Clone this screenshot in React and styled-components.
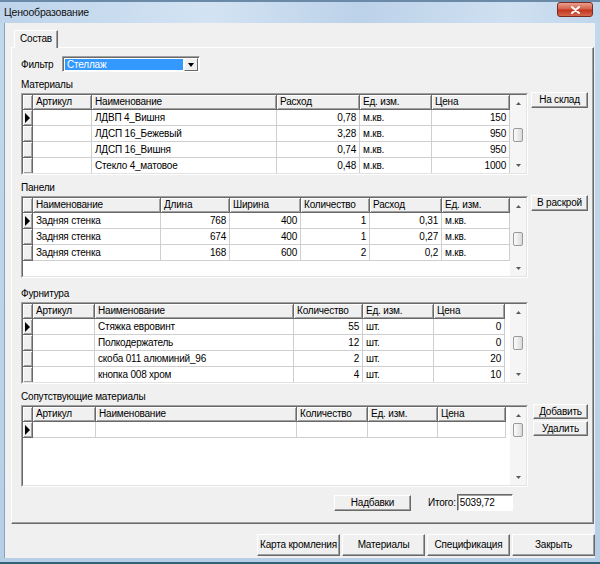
import React from "react";
import styled, { createGlobalStyle } from "styled-components";

const GlobalStyle = createGlobalStyle`
  html, body { margin: 0; padding: 0; background: #fff; }
  body {
    font-family: "Liberation Sans", Arial, sans-serif;
    font-size: 10px;
    letter-spacing: -0.2px;
    color: #000;
  }
`;

const Window = styled.div`
  width: 600px;
  height: 564px;
  box-sizing: border-box;
  display: flex;
  flex-direction: column;
  background: linear-gradient(180deg, #c3d8ed 0%, #b7cfe6 100%);
  padding-bottom: 4px;
  border-bottom: 2px solid #2f6477;
  overflow: hidden;
`;

const TitleBar = styled.div`
  height: 23px;
  flex: none;
  box-sizing: border-box;
  display: flex;
  align-items: flex-start;
  justify-content: space-between;
  padding: 0 7px 0 4px;
  border-top: 2px solid #6b8aa8;
  background: linear-gradient(90deg, #bdd4eb 0%, #d3e3f3 35%, #bcd2e9 60%, #cfe0f1 85%, #c0d6ec 100%);
`;

const Title = styled.span`
  font-size: 10.5px;
  line-height: 21px;
  color: #111;
`;

const CloseButton = styled.div`
  width: 36px;
  height: 15px;
  box-sizing: border-box;
  border: 1px solid #7b2a1f;
  border-radius: 3px;
  background: linear-gradient(180deg, #e9a08f 0%, #d6604a 45%, #c2351d 55%, #d3694f 100%);
  display: flex;
  align-items: center;
  justify-content: center;
`;

const Client = styled.div`
  flex: 1;
  margin: 0 5px 0 4px;
  padding: 0 0 2px 6px;
  background: #f0f0f0;
  display: flex;
  flex-direction: column;
  border-left: 1px solid #8aa3bd;
`;

const TabStrip = styled.div`
  height: 24px;
  flex: none;
  display: flex;
  align-items: flex-end;
  padding-left: 3px;
`;

const Tab = styled.div`
  position: relative;
  z-index: 1;
  height: 18px;
  box-sizing: border-box;
  padding: 0 5px 0 5px;
  margin-bottom: -1px;
  line-height: 16px;
  background: #f0f0f0;
  border-top: 1px solid #fff;
  border-left: 1px solid #fff;
  border-right: 1px solid #696969;
  box-shadow: inset -1px 0 0 #a0a0a0;
`;

const TabPage = styled.div`
  height: 477px;
  flex: none;
  box-sizing: border-box;
  margin-right: 1px;
  padding: 8px 0 0 9px;
  background: #f0f0f0;
  border-top: 1px solid #fff;
  border-left: 1px solid #fff;
  border-right: 1px solid #696969;
  border-bottom: 1px solid #696969;
  box-shadow: inset -1px -1px 0 #a0a0a0;
`;

const FilterRow = styled.div`
  display: flex;
  align-items: center;
  height: 16px;
`;

const FilterLabel = styled.span`
  width: 41px;
`;

const Combo = styled.div`
  width: 138px;
  height: 16px;
  box-sizing: border-box;
  display: flex;
  border: 1px solid;
  border-color: #a0a0a0 #fff #fff #a0a0a0;
  background: #fff;
`;

const ComboInner = styled.div`
  flex: 1;
  display: flex;
  padding: 1px;
  border-top: 1px solid #696969;
  border-left: 1px solid #696969;
`;

const ComboValue = styled.div`
  flex: 1;
  background: #3399ff;
  color: #fff;
  line-height: 11px;
  padding-left: 2px;
`;

const ComboButton = styled.div`
  width: 14px;
  box-sizing: border-box;
  margin: -1px 0 -1px 1px;
  background: #f0f0f0;
  border: 1px solid;
  border-color: #fff #696969 #696969 #fff;
  display: flex;
  align-items: center;
  justify-content: center;
`;

const DownTriangle = styled.span`
  width: 0;
  height: 0;
  border-left: 3.5px solid transparent;
  border-right: 3.5px solid transparent;
  border-top: 4px solid #000;
`;

const Section = styled.div`
  margin-top: ${(p) => p.$top}px;
`;

const SectionLabel = styled.div`
  height: 14px;
  line-height: 14px;
  margin-bottom: 1px;
`;

const SectionRow = styled.div`
  display: flex;
  align-items: flex-start;
`;

const GridBox = styled.div`
  width: 507px;
  height: 82px;
  flex: none;
  box-sizing: border-box;
  border: 1px solid;
  border-color: #a0a0a0 #fff #fff #a0a0a0;
  display: flex;
`;

const GridInner = styled.div`
  flex: 1;
  display: flex;
  border-top: 1px solid #696969;
  border-left: 1px solid #696969;
  border-right: 1px solid #e3e3e3;
  border-bottom: 1px solid #e3e3e3;
  background: #fff;
  overflow: hidden;
`;

const TableArea = styled.div`
  flex: 1;
  overflow: hidden;
  display: flex;
  flex-direction: column;
`;

const HeaderRow = styled.div`
  display: flex;
  height: 15px;
  flex: none;
`;

const DataRow = styled.div`
  display: flex;
  height: 16px;
  flex: none;
`;

const HeadCell = styled.div`
  width: ${(p) => p.$w}px;
  flex: none;
  box-sizing: border-box;
  background: #f0f0f0;
  border-right: 1px solid #696969;
  border-bottom: 1px solid #696969;
  box-shadow: inset 1px 1px 0 #fff, inset -1px -1px 0 #a0a0a0;
  padding-left: 3px;
  line-height: 14px;
  white-space: nowrap;
  overflow: hidden;
`;

const IndicatorCell = styled.div`
  width: 10px;
  flex: none;
  box-sizing: border-box;
  background: #f0f0f0;
  border-right: 1px solid #696969;
  border-bottom: 1px solid #696969;
  box-shadow: inset 1px 1px 0 #fff, inset -1px -1px 0 #a0a0a0;
  display: flex;
  align-items: center;
  padding-left: 2px;
`;

const RowMarker = styled.span`
  width: 0;
  height: 0;
  border-top: 5px solid transparent;
  border-bottom: 5px solid transparent;
  border-left: 5px solid #000;
`;

const Cell = styled.div`
  width: ${(p) => p.$w}px;
  flex: none;
  box-sizing: border-box;
  border-right: 1px solid #cfcfcf;
  border-bottom: 1px solid #cfcfcf;
  padding: 0 3px;
  line-height: 15px;
  text-align: ${(p) => p.$align || "left"};
  white-space: nowrap;
  overflow: hidden;
`;

const ScrollBar = styled.div`
  width: 16px;
  flex: none;
  background: #f5f5f5;
  display: flex;
  flex-direction: column;
`;

const ScrollArrow = styled.div`
  height: 16px;
  flex: none;
  display: flex;
  align-items: center;
  justify-content: center;
`;

const ScrollTrack = styled.div`
  flex: 1;
`;

const Thumb = styled.div`
  width: 10px;
  height: 14px;
  margin: ${(p) => p.$top}px 0 0 3px;
  box-sizing: border-box;
  border: 1px solid #9a9a9a;
  border-radius: 2px;
  background: linear-gradient(90deg, #fbfbfb 0%, #e9e9e9 60%, #d9d9d9 100%);
`;

const SideColumn = styled.div`
  display: flex;
  flex-direction: column;
  gap: 2px;
  margin-left: ${(p) => p.$left}px;
  margin-top: -1px;
`;

const Button = styled.button`
  width: ${(p) => p.$w}px;
  height: ${(p) => p.$h}px;
  box-sizing: border-box;
  padding: 0;
  margin: 0;
  font-family: inherit;
  font-size: 10px;
  letter-spacing: -0.2px;
  white-space: nowrap;
  color: #000;
  background: #f0f0f0;
  border: 1px solid;
  border-color: #fff #696969 #696969 #fff;
  box-shadow: inset -1px -1px 0 #a0a0a0;
  border-radius: 0;
  line-height: 12px;
`;

const TotalsRow = styled.div`
  display: flex;
  align-items: center;
  margin: 7px 0 0 313px;
`;

const TotalLabel = styled.span`
  margin: 0 1px 0 17px;
`;

const TotalInput = styled.div`
  width: 56px;
  height: 17px;
  box-sizing: border-box;
  background: #fff;
  border: 1px solid;
  border-color: #696969 #fff #fff #696969;
  box-shadow: inset 1px 1px 0 #a0a0a0;
  padding-left: 2px;
  line-height: 15px;
`;

const Footer = styled.div`
  display: flex;
  justify-content: flex-end;
  gap: 2px;
  padding-top: 10px;
`;

const ArrowIcon = ({ down }) => (
  <svg width="5" height="3" viewBox="0 0 5 3">
    <path d={down ? "M0 0 L5 0 L2.5 3 Z" : "M0 3 L5 3 L2.5 0 Z"} fill="#5a5a5a" />
  </svg>
);

const DataGrid = ({ columns, rows, thumbTop }) => (
  <GridBox>
    <GridInner>
      <TableArea>
        <HeaderRow>
          <HeadCell $w={10} />
          {columns.map((c) => (
            <HeadCell key={c.title} $w={c.width}>
              {c.title}
            </HeadCell>
          ))}
        </HeaderRow>
        {rows.map((r, i) => (
          <DataRow key={i}>
            <IndicatorCell>{i === 0 && <RowMarker />}</IndicatorCell>
            {columns.map((c, j) => (
              <Cell key={j} $w={c.width} $align={c.align}>
                {r[j]}
              </Cell>
            ))}
          </DataRow>
        ))}
      </TableArea>
      <ScrollBar>
        <ScrollArrow>
          <ArrowIcon />
        </ScrollArrow>
        <ScrollTrack>
          <Thumb $top={thumbTop} />
        </ScrollTrack>
        <ScrollArrow>
          <ArrowIcon down />
        </ScrollArrow>
      </ScrollBar>
    </GridInner>
  </GridBox>
);

const materialCols = [
  { title: "Артикул", width: 59 },
  { title: "Наименование", width: 185 },
  { title: "Расход", width: 83, align: "right" },
  { title: "Ед. изм.", width: 72 },
  { title: "Цена", width: 78, align: "right" },
];

const materialRows = [
  ["", "ЛДВП 4_Вишня", "0,78", "м.кв.", "150"],
  ["", "ЛДСП 16_Бежевый", "3,28", "м.кв.", "950"],
  ["", "ЛДСП 16_Вишня", "0,74", "м.кв.", "950"],
  ["", "Стекло 4_матовое", "0,48", "м.кв.", "1000"],
];

const panelCols = [
  { title: "Наименование", width: 128 },
  { title: "Длина", width: 69, align: "right" },
  { title: "Ширина", width: 71, align: "right" },
  { title: "Количество", width: 69, align: "right" },
  { title: "Расход", width: 72, align: "right" },
  { title: "Ед. изм.", width: 68 },
];

const panelRows = [
  ["Задняя стенка", "768", "400", "1", "0,31", "м.кв."],
  ["Задняя стенка", "674", "400", "1", "0,27", "м.кв."],
  ["Задняя стенка", "168", "600", "2", "0,2", "м.кв."],
];

const fittingCols = [
  { title: "Артикул", width: 62 },
  { title: "Наименование", width: 199 },
  { title: "Количество", width: 69, align: "right" },
  { title: "Ед. изм.", width: 71 },
  { title: "Цена", width: 71, align: "right" },
];

const fittingRows = [
  ["", "Стяжка евровинт", "55", "шт.", "0"],
  ["", "Полкодержатель", "12", "шт.", "0"],
  ["", "скоба 011 алюминий_96", "2", "шт.", "20"],
  ["", "кнопка 008 хром", "4", "шт.", "10"],
];

const relatedCols = [
  { title: "Артикул", width: 63 },
  { title: "Наименование", width: 201 },
  { title: "Количество", width: 71 },
  { title: "Ед. изм.", width: 70 },
  { title: "Цена", width: 68 },
];

const relatedRows = [["", "", "", "", ""]];

export default function App() {
  return (
    <>
      <GlobalStyle />
      <Window>
        <TitleBar>
          <Title>Ценообразование</Title>
          <CloseButton>
            <svg width="9" height="8" viewBox="0 0 9 8">
              <path d="M1 1 L8 7 M8 1 L1 7" stroke="#fff" strokeWidth="2" strokeLinecap="round" />
            </svg>
          </CloseButton>
        </TitleBar>
        <Client>
          <TabStrip>
            <Tab>Состав</Tab>
          </TabStrip>
          <TabPage>
            <FilterRow>
              <FilterLabel>Фильтр</FilterLabel>
              <Combo>
                <ComboInner>
                  <ComboValue>Стеллаж</ComboValue>
                  <ComboButton>
                    <DownTriangle />
                  </ComboButton>
                </ComboInner>
              </Combo>
            </FilterRow>

            <Section $top={6}>
              <SectionLabel>Материалы</SectionLabel>
              <SectionRow>
                <DataGrid columns={materialCols} rows={materialRows} thumbTop={17} />
                <SideColumn $left={3}>
                  <Button $w={57} $h={16}>На склад</Button>
                </SideColumn>
              </SectionRow>
            </Section>

            <Section $top={6}>
              <SectionLabel>Панели</SectionLabel>
              <SectionRow>
                <DataGrid columns={panelCols} rows={panelRows} thumbTop={18} />
                <SideColumn $left={3}>
                  <Button $w={57} $h={16}>В раскрой</Button>
                </SideColumn>
              </SectionRow>
            </Section>

            <Section $top={9}>
              <SectionLabel>Фурнитура</SectionLabel>
              <SectionRow>
                <DataGrid columns={fittingCols} rows={fittingRows} thumbTop={16} />
              </SectionRow>
            </Section>

            <Section $top={6}>
              <SectionLabel>Сопутствующие материалы</SectionLabel>
              <SectionRow>
                <DataGrid columns={relatedCols} rows={relatedRows} thumbTop={0} />
                <SideColumn $left={5}>
                  <Button $w={55} $h={15}>Добавить</Button>
                  <Button $w={55} $h={15}>Удалить</Button>
                </SideColumn>
              </SectionRow>
            </Section>

            <TotalsRow>
              <Button $w={77} $h={16}>Надбавки</Button>
              <TotalLabel>Итого:</TotalLabel>
              <TotalInput>5039,72</TotalInput>
            </TotalsRow>
          </TabPage>
          <Footer>
            <Button $w={83} $h={22}>Карта кромления</Button>
            <Button $w={83} $h={22}>Материалы</Button>
            <Button $w={83} $h={22}>Спецификация</Button>
            <Button $w={83} $h={22}>Закрыть</Button>
          </Footer>
        </Client>
      </Window>
    </>
  );
}
